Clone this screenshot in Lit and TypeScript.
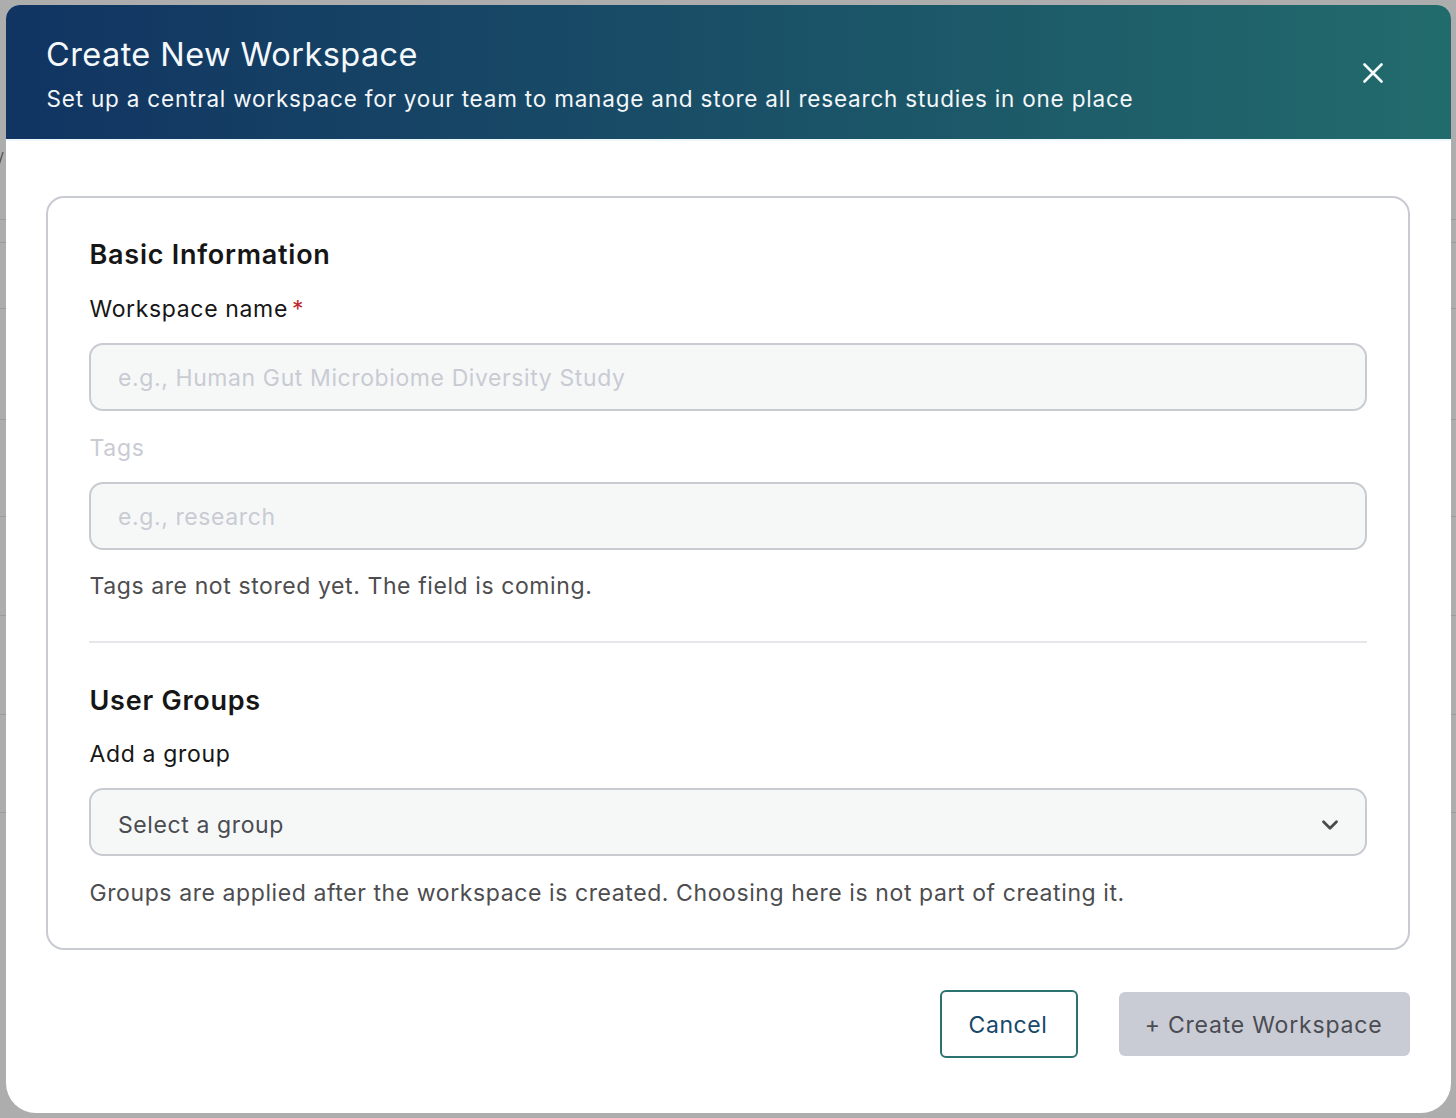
import { LitElement, html, css } from "lit";
import { customElement } from "lit/decorators.js";

@customElement("app-root")
export class AppRoot extends LitElement {
  static styles = css`
    :host { display: block; font-family: Inter, "Liberation Sans", sans-serif; }
    .page { position: relative; width: 1456px; height: 1118px; background: #adadad; overflow: hidden; }
    .behind { display: flex; flex-direction: column; }
    .behind i { display: block; height: 1px; background: #9c9c9c; margin-bottom: var(--gap); }
    .slash { height: 219px; box-sizing: border-box; padding-top: 152px; }
    .slash svg { display: block; width: 6px; height: 16px; margin-left: -2px; }
    .modal { position: absolute; left: 6px; top: 5px; width: 1445px; height: 1108px; background: #fff; border-radius: 14px 14px 30px 30px; overflow: hidden; display: flex; flex-direction: column; }
    header { height: 134px; flex: none; box-sizing: border-box; background: linear-gradient(90deg, #113462, #226b6c); color: #fff; padding: 31px 40px 0 40px; display: flex; justify-content: space-between; }
    .rule { height: 2px; background: #eef7fa; flex: none; }
    h1 { margin: 0; font-size: 32.5px; line-height: 38px; font-weight: 400; letter-spacing: 0.42px; color: #f5f9fc; }
    .sub { margin: 10px 0 0 0.5px; font-size: 22.5px; line-height: 30px; letter-spacing: 0.8px; color: #f3f7fa; }
    .close { width: 20px; height: 20px; margin: 27px 28px 0 0; color: #f6fafb; }
    .close svg { display: block; width: 20px; height: 20px; }
    .body { flex: 1; display: flex; flex-direction: column; padding: 55px 41px 0 40px; }
    .card { height: 754px; box-sizing: border-box; border: 2px solid #c9cbd3; border-radius: 18px; padding: 41px 41px 0 41px; }
    h2 { margin: 0 0 0 0.5px; font-size: 27px; line-height: 32px; font-weight: 600; letter-spacing: 0.75px; color: #161616; }
    label { display: block; margin-left: 0.5px; font-size: 23px; line-height: 30px; letter-spacing: 0.65px; color: #161616; }
    label b { font-weight: 400; color: #c0282d; margin-left: 4px; }
    .mt1 { margin-top: 23px; }
    .mt2 { margin-top: 22px; }
    .field { height: 68px; box-sizing: border-box; border: 2px solid #c9cbd3; border-radius: 14px; background: #f6f8f8; padding: 2px 27px 0; display: flex; align-items: center; justify-content: space-between; font-size: 23px; letter-spacing: 0.6px; margin-top: 19px; }
    .field.select { padding-top: 6px; }
    .ph { color: #c9cbd3; }
    .val { color: #4a4c52; }
    .dis { color: #c9cbd3; margin-top: 22px; }
    .hint { margin: 21px 0 0 0.5px; font-size: 23px; line-height: 30px; letter-spacing: 0.59px; color: #4d4d4f; }
    .hint.last { margin-top: 22px; }
    hr { border: 0; height: 2px; background: #e6e7ea; margin: 40px 0 0; }
    .g { margin-top: 42px; }
    .chev { width: 20px; height: 12px; margin-right: -2px; flex: none; display: block; }
    footer { display: flex; justify-content: flex-end; align-items: center; gap: 41px; margin-top: 40px; }
    .btn { box-sizing: border-box; display: flex; align-items: center; justify-content: center; padding-top: 2px; font-size: 23px; border-radius: 6px; }
    .cancel { width: 138px; height: 68px; border: 2px solid #2c7370; color: #17486a; background: #fff; letter-spacing: 0.6px; padding-right: 2px; }
    .create { width: 291px; height: 64px; background: #c9cbd5; color: #4a4c52; letter-spacing: 0.8px; padding-right: 2px; }
  `;

  render() {
    const gaps = [22, 65, 110, 96, 98, 98, 97, 0];
    return html`<div class="page">
      <div class="behind">
        <div class="slash">
          <svg viewBox="0 0 6 16" fill="none" stroke="#5a5a5a" stroke-width="1.4"><path d="M5 0 1 13"/></svg>
        </div>
        ${gaps.map((g) => html`<i style="--gap:${g}px"></i>`)}
      </div>
      <div class="modal">
        <header>
          <div>
            <h1>Create New Workspace</h1>
            <p class="sub">Set up a central workspace for your team to manage and store all research studies in one place</p>
          </div>
          <div class="close">
            <svg viewBox="0 0 20 20" fill="none" stroke="currentColor" stroke-width="2.6" stroke-linecap="round"><path d="M1.5 1.5 18.5 18.5M18.5 1.5 1.5 18.5"/></svg>
          </div>
        </header>
        <div class="rule"></div>
        <div class="body">
          <section class="card">
            <h2>Basic Information</h2>
            <label class="mt1">Workspace name<b>*</b></label>
            <div class="field"><span class="ph">e.g., Human Gut Microbiome Diversity Study</span></div>
            <label class="dis">Tags</label>
            <div class="field"><span class="ph">e.g., research</span></div>
            <p class="hint">Tags are not stored yet. The field is coming.</p>
            <hr />
            <h2 class="g">User Groups</h2>
            <label class="mt2">Add a group</label>
            <div class="field select">
              <span class="val">Select a group</span>
              <svg class="chev" viewBox="0 0 20 12" fill="none" stroke="#4a4a4a" stroke-width="2.8" stroke-linecap="round" stroke-linejoin="round"><path d="M3.5 2.7 10 9.2 16.5 2.7"/></svg>
            </div>
            <p class="hint last">Groups are applied after the workspace is created. Choosing here is not part of creating it.</p>
          </section>
          <footer>
            <div class="btn cancel">Cancel</div>
            <div class="btn create">+ Create Workspace</div>
          </footer>
        </div>
      </div>
    </div>`;
  }
}
